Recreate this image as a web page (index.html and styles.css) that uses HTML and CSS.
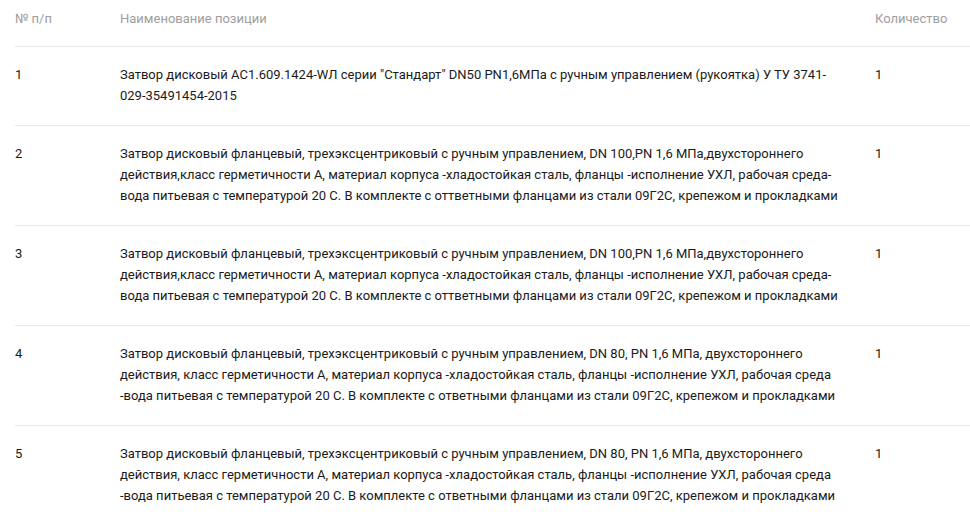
FILE: index.html
```html
<!DOCTYPE html>
<html lang="ru">
<head>
  <meta charset="UTF-8" />
  <title>Позиции</title>
  <link rel="stylesheet" href="styles.css">
</head>
<body>

<table class="items">
  <thead>
    <tr>
      <th class="col-num">№ п/п</th>
      <th class="col-name">Наименование позиции</th>
      <th class="col-qty">Количество</th>
    </tr>
  </thead>
  <tbody>
    <tr>
      <td>1</td>
      <td>Затвор дисковый АС1.609.1424-WЛ серии "Стандарт" DN50 PN1,6МПа с ручным управлением (рукоятка) У ТУ 3741-029-35491454-2015</td>
      <td>1</td>
    </tr>
    <tr>
      <td>2</td>
      <td>Затвор дисковый фланцевый, трехэксцентриковый с ручным управлением, DN 100,PN 1,6 МПа,двухстороннего действия,класс герметичности А, материал корпуса -хладостойкая сталь, фланцы -исполнение УХЛ, рабочая среда-вода питьевая с температурой 20 С. В комплекте с оттветными фланцами из стали 09Г2С, крепежом и прокладками</td>
      <td>1</td>
    </tr>
    <tr>
      <td>3</td>
      <td>Затвор дисковый фланцевый, трехэксцентриковый с ручным управлением, DN 100,PN 1,6 МПа,двухстороннего действия,класс герметичности А, материал корпуса -хладостойкая сталь, фланцы -исполнение УХЛ, рабочая среда-вода питьевая с температурой 20 С. В комплекте с оттветными фланцами из стали 09Г2С, крепежом и прокладками</td>
      <td>1</td>
    </tr>
    <tr>
      <td>4</td>
      <td>Затвор дисковый фланцевый, трехэксцентриковый с ручным управлением, DN 80, PN 1,6 МПа, двухстороннего действия, класс герметичности А, материал корпуса -хладостойкая сталь, фланцы -исполнение УХЛ, рабочая среда -вода питьевая с температурой 20 С. В комплекте с ответными фланцами из стали 09Г2С, крепежом и прокладками</td>
      <td>1</td>
    </tr>
    <tr>
      <td>5</td>
      <td>Затвор дисковый фланцевый, трехэксцентриковый с ручным управлением, DN 80, PN 1,6 МПа, двухстороннего действия, класс герметичности А, материал корпуса -хладостойкая сталь, фланцы -исполнение УХЛ, рабочая среда -вода питьевая с температурой 20 С. В комплекте с ответными фланцами из стали 09Г2С, крепежом и прокладками</td>
      <td>1</td>
    </tr>
  </tbody>
</table>

</body>
</html>
```

FILE: styles.css
```css
body {
  font-family: Roboto, Arial, sans-serif;
  background-color: #fff;
  color: #1a1a1a;
  margin: 0;
  padding: 0;
}

.items {
  margin-left: 15px;
  width: calc(100% - 15px);
  border-collapse: collapse;
  table-layout: fixed;
  font-size: 13px;
  line-height: 21px;
}

.items th {
  font-weight: normal;
  color: #9e9e9e;
  text-align: left;
  line-height: 20px;
  padding: 9px 0 17px;
  border-bottom: 1px solid #e4e9ee;
}

.items td {
  vertical-align: top;
  padding: 17px 0 19px;
  border-bottom: 1px solid #e4e9ee;
}

.col-num {
  width: 105px;
}

.col-name {
  width: 755px;
}

.items td:nth-child(2) {
  padding-right: 30px;
}
```
